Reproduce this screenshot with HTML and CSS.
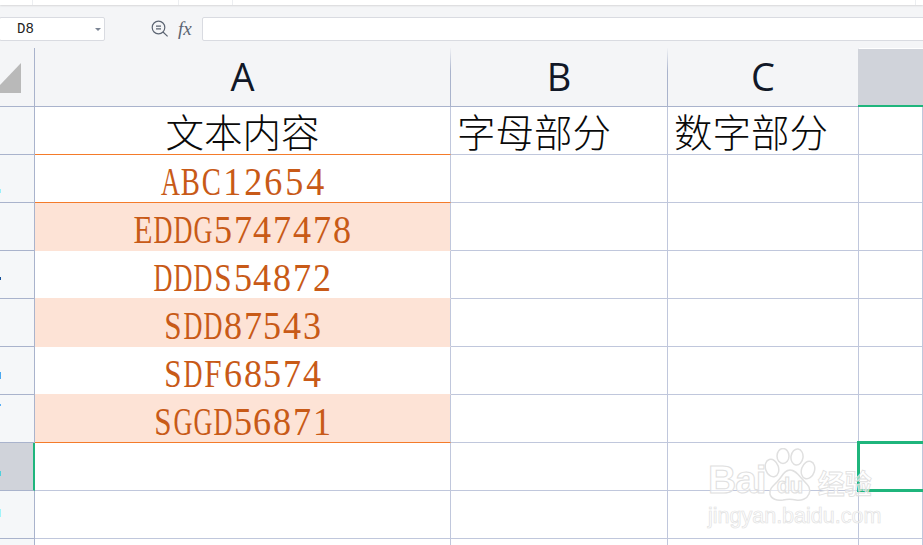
FILE: index.html
```html
<!DOCTYPE html>
<html lang="zh-CN">
<head>
<meta charset="utf-8">
<title>表格</title>
<link rel="stylesheet" href="styles.css">
</head>
<body>
<div class="app">
  <div class="toolbar"><i class="seg s1"></i><i class="seg s2"></i><i class="seg s3"></i><i class="seg s4"></i></div>
  <div class="formula">
    <div class="namebox"><span>D8</span><i class="caret"></i></div>
    <svg class="zoom-ico" width="18" height="18" viewBox="0 0 18 18" fill="none" stroke="#5b6472" stroke-width="1.2"><circle cx="7.5" cy="7.5" r="6.3"/><path d="M5 6.2h5M5 8.800h5M12 12l4.600 4.400"/></svg>
    <span class="fx">fx</span>
    <div class="input"></div>
  </div>
  <div class="sheet">
    <div class="corner"><svg width="21" height="30" viewBox="0 0 21 30"><path d="M21 0V30H0V22Z" fill="#b9b9b9"/></svg></div>
    <div class="head"><span>A</span></div>
    <div class="head"><span>B</span></div>
    <div class="head"><span>C</span></div>
    <div class="head sel"></div>

    <div class="rowh"></div>
    <div class="cell cjk center line">文本内容</div>
    <div class="cell cjk">字母部分</div>
    <div class="cell cjk">数字部分</div>
    <div class="cell"></div>

    <div class="rowh"><i class="tick t1"></i></div>
    <div class="cell data line wide"><b>A</b><b class="m">B</b><b class="m">C</b><i>1</i><i>2</i><i>6</i><i>5</i><i>4</i></div>
    <div class="cell"></div><div class="cell"></div><div class="cell"></div>

    <div class="rowh"></div>
    <div class="cell data fill"><b class="n">E</b><b>D</b><b>D</b><b>G</b><i>5</i><i>7</i><i>4</i><i>7</i><i>4</i><i>7</i><i>8</i></div>
    <div class="cell"></div><div class="cell"></div><div class="cell"></div>

    <div class="rowh"><i class="tick t2"></i></div>
    <div class="cell data nob"><b>D</b><b>D</b><b>D</b><b class="n">S</b><i>5</i><i>4</i><i>8</i><i>7</i><i>2</i></div>
    <div class="cell"></div><div class="cell"></div><div class="cell"></div>

    <div class="rowh"></div>
    <div class="cell data fill"><b class="n">S</b><b>D</b><b>D</b><i>8</i><i>7</i><i>5</i><i>4</i><i>3</i></div>
    <div class="cell"></div><div class="cell"></div><div class="cell"></div>

    <div class="rowh"><i class="tick t3"></i></div>
    <div class="cell data nob"><b class="n">S</b><b>D</b><b class="n">F</b><i>6</i><i>8</i><i>5</i><i>7</i><i>4</i></div>
    <div class="cell"></div><div class="cell"></div><div class="cell"></div>

    <div class="rowh"><i class="tick t4"></i></div>
    <div class="cell data fill line"><b class="n">S</b><b>G</b><b>G</b><b>D</b><i>5</i><i>6</i><i>8</i><i>7</i><i>1</i></div>
    <div class="cell"></div><div class="cell"></div><div class="cell"></div>

    <div class="rowh sel-row"><i class="tick t5"></i></div>
    <div class="cell"></div><div class="cell"></div><div class="cell"></div>
    <div class="cell active"></div>

    <div class="rowh"><i class="tick t6"></i></div>
    <div class="cell"></div><div class="cell"></div><div class="cell"></div><div class="cell"></div>

    <div class="rowh"></div>
    <div class="cell"></div><div class="cell"></div><div class="cell"></div><div class="cell"></div>
  </div>
  <div class="mark">
    <div class="mark-top">
      <span class="bai">Bai</span>
      <svg class="paw" width="52" height="54" viewBox="0 0 52 54" fill="rgba(255,255,255,.55)" stroke="#e0e0e0" stroke-width="1.500"><ellipse cx="8" cy="20" rx="6.500" ry="9" transform="rotate(-18 8 20)"/><ellipse cx="19" cy="8" rx="6" ry="7.500"/><ellipse cx="33" cy="9" rx="6" ry="8" transform="rotate(8 33 9)"/><ellipse cx="44" cy="22" rx="6.500" ry="9" transform="rotate(18 44 22)"/><path d="M26 22c6 0 9 6 14 11 5 5 7 8 5 13-2 5-8 7-13 6-5-1-8-1-13 0-6 1-12-1-13-6-1-5 3-8 7-12 5-5 7-12 13-12Z"/></svg>
      <span class="du">du</span>
      <span class="jy">经验</span>
    </div>
    <div class="mark-url">jingyan.baidu.com</div>
  </div>
</div>
</body>
</html>
```
FILE: styles.css
```css
* { box-sizing: border-box; }
html, body { margin: 0; height: 100%; overflow: hidden; background: #fff; }
.app { position: relative; width: 923px; height: 545px; overflow: hidden; font-family: "Noto Sans CJK SC", "Liberation Sans", sans-serif; }

.toolbar { height: 5px; background: #fff; box-shadow: 0 1px 2px rgba(0,0,0,.12); position: relative; display: flex; }
.seg { display: block; height: 5px; border-right: 1px solid #eceef1; }
.s1 { width: 33px; }
.s2 { width: 146px; }
.s3 { width: 54px; }
.s4 { width: 683px; }
.formula { height: 43px; background: #f4f5f7; display: flex; align-items: center; padding-top: 5px; }
.namebox { width: 106px; height: 24px; margin-left: -1px; background: #fff; border: 1px solid #d9dbe1; border-radius: 2px; display: flex; align-items: center; justify-content: space-between; padding: 0 3px 0 17px; font: 14px "Liberation Mono", monospace; color: #222; }
.caret { width: 0; height: 0; border: 3px solid transparent; border-top: 3px solid #7b8494; border-bottom: 0; }
.zoom-ico { margin-left: 46px; }
.fx { width: 16px; margin-left: 9px; font: italic 19px "Liberation Serif", serif; color: #5b6472; }
.input { flex: 1; height: 24px; margin-left: 8px; margin-right: -4px; background: #fff; border: 1px solid #d9dbe1; border-radius: 2px; }

.sheet { display: grid; grid-template-columns: 35px 416px 217px 191px 64px; grid-template-rows: 59px repeat(10, 48px); }
.corner { background: #f4f5f7; border-right: 1px solid #a9b3cc; border-bottom: 1px solid #a9b3cc; padding-top: 15px; }
.corner svg { display: block; }
.head { background: #f4f5f7; border-right: 1px solid; border-image: linear-gradient(#f4f5f7, #a9b3cc 40%) 1; display: flex; justify-content: center; align-items: flex-end; font: 38px/48px "Open Sans", "Liberation Sans", sans-serif; color: #111827; padding-bottom: 7px; box-shadow: inset 0 -1px 0 #a9b3cc; }
.head.sel { background: #d0d3da; box-shadow: inset 0 -2px 0 #1fb57c; border-right: 0; margin-left: -1px; margin-top: 1px; }

.rowh { position: relative; background: #f5f7f9; border-right: 1px solid #a9b3cc; border-bottom: 1px solid #a9b3cc; }
.rowh.sel-row { background: #d0d3da; border-right: 2px solid #1fb57c; }
.tick { position: absolute; left: 0; width: 1px; }
.t1 { top: 34px; height: 4px; background: #9af0fa; }
.t2 { top: 26px; height: 3px; background: #14509a; }
.t3 { top: 25px; height: 7px; background: #4aa8f0; }
.t4 { top: 9px; height: 2px; background: #5ab0f5; }
.t5 { top: 28px; height: 5px; background: #50d0dc; }
.t6 { top: 18px; height: 8px; background: #a0f4fa; }

.cell { background: #fff; border-right: 1px solid #c0c7dc; border-bottom: 1px solid #c0c7dc; min-width: 0; }
.cjk { font-size: 38.500px; line-height: 47px; font-weight: 300; color: #0a0a0a; padding-left: 6px; white-space: nowrap; }
.center { text-align: center; padding-left: 0; }
.line { border-bottom-color: #f47b2a; }
.data { display: flex; justify-content: center; align-items: center; font: 41px/41px "Liberation Serif", serif; color: #c85a17; white-space: nowrap; padding-top: 6px; }
.nob { border-bottom-color: #fde3d6; }
.data.fill { background: #fde3d6; }
.data.fill:not(.line) { border-bottom-color: #fde3d6; }
.data b, .data i { font-weight: 400; font-style: normal; display: flex; justify-content: center; width: 19.900px; }
.data b { transform: scaleX(.64); }
.data b.m { transform: scaleX(.7); }
.data b.n { transform: scaleX(.76); }
.data i { transform: scaleX(.88); }
.data.wide b, .data.wide i { width: 20.750px; }
.active { position: relative; overflow: visible; }
.active::after { content: ""; position: absolute; left: -2px; top: -2px; right: -6px; bottom: -2px; border: 3px solid #1fb57c; }

.mark { position: absolute; left: 708px; top: 446px; width: 170px; pointer-events: none; font-family: "Liberation Sans", sans-serif; color: rgba(255,255,255,.55); -webkit-text-stroke: 1px #e0e0e0; }
.mark-top { display: flex; align-items: flex-end; height: 56px; }
.bai { font-size: 39px; font-weight: 700; line-height: 44px; letter-spacing: -1px; flex: none; }
.paw { margin-left: -2px; flex: none; }
.du { font-size: 22px; font-weight: 700; line-height: 32px; margin-left: -39px; width: 39px; flex: none; letter-spacing: -.5px; }
.jy { font: 700 27px/38px "Noto Sans CJK SC", sans-serif; margin-left: 2px; white-space: nowrap; flex: none; -webkit-text-stroke: .8px #e0e0e0; }
.mark-url { font-size: 21.500px; line-height: 24px; margin-top: 2px; white-space: nowrap; -webkit-text-stroke: .7px #e2e2e2; }
```
